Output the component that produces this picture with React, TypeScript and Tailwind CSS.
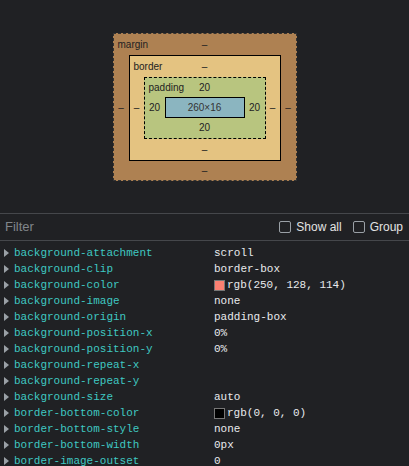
const rows: { name: string; value?: string; swatch?: string }[] = [
  { name: 'background-attachment', value: 'scroll' },
  { name: 'background-clip', value: 'border-box' },
  { name: 'background-color', value: 'rgb(250, 128, 114)', swatch: '#fa8072' },
  { name: 'background-image', value: 'none' },
  { name: 'background-origin', value: 'padding-box' },
  { name: 'background-position-x', value: '0%' },
  { name: 'background-position-y', value: '0%' },
  { name: 'background-repeat-x' },
  { name: 'background-repeat-y' },
  { name: 'background-size', value: 'auto' },
  { name: 'border-bottom-color', value: 'rgb(0, 0, 0)', swatch: '#000000' },
  { name: 'border-bottom-style', value: 'none' },
  { name: 'border-bottom-width', value: '0px' },
  { name: 'border-image-outset', value: '0' },
];

function BoxModel() {
  return (
    <div
      className="w-[184px] h-[148px] border border-dashed border-[#333] bg-[#ae8152] flex flex-col text-[10px] text-[#222] leading-none"
      style={{ fontFamily: '"Liberation Sans", Arial, sans-serif' }}
    >
      <div className="h-[21px] grid grid-cols-[1fr_auto_1fr] items-center px-[4px]">
        <span>margin</span>
        <span>–</span>
        <span />
      </div>
      <div className="flex items-center">
        <div className="w-[15px] text-center">–</div>
        <div className="w-[152px] h-[106px] border border-black bg-[#e4c381] flex flex-col">
          <div className="h-[21px] grid grid-cols-[1fr_auto_1fr] items-center px-[4px]">
            <span>border</span>
            <span>–</span>
            <span />
          </div>
          <div className="flex items-center">
            <div className="w-[14px] text-center">–</div>
            <div className="w-[122px] h-[62px] border border-dashed border-black bg-[#b8c57f] flex flex-col">
              <div className="h-[19px] grid grid-cols-[1fr_auto_1fr] items-center px-[4px]">
                <span>padding</span>
                <span>20</span>
                <span />
              </div>
              <div className="flex items-center">
                <div className="w-[20px] text-center">20</div>
                <div className="w-[80px] h-[21px] border border-black bg-[#8bb5c0] flex items-center justify-center text-[#333]">
                  260×16
                </div>
                <div className="w-[20px] text-center">20</div>
              </div>
              <div className="flex-1 flex items-center justify-center">20</div>
            </div>
            <div className="w-[14px] text-center">–</div>
          </div>
          <div className="flex-1 flex items-center justify-center">–</div>
        </div>
        <div className="w-[15px] text-center">–</div>
      </div>
      <div className="flex-1 flex items-center justify-center">–</div>
    </div>
  );
}

function Checkbox({ label }: { label: string }) {
  return (
    <label className="flex items-center gap-[5px]">
      <span className="w-[12px] h-[12px] rounded-[2px] border border-[#9aa0a6]" />
      <span>{label}</span>
    </label>
  );
}

export default function App() {
  return (
    <div className="w-[409px] h-[466px] bg-[#202124] overflow-hidden flex flex-col">
      <div className="h-[213px] shrink-0 flex justify-center pt-[33px]">
        <BoxModel />
      </div>
      <div
        className="h-[28px] shrink-0 border-y border-[#45474b] flex items-center justify-between pl-[5px] pr-[6px] text-[12px] text-[#e3e3e3]"
        style={{ fontFamily: '"Liberation Sans", Arial, sans-serif' }}
      >
        <span className="text-[#80868b] text-[13px]">Filter</span>
        <div className="flex items-center gap-[11px]">
          <Checkbox label="Show all" />
          <Checkbox label="Group" />
        </div>
      </div>
      <div className="shrink-0 pt-[4px] text-[11px]" style={{ fontFamily: '"Liberation Mono", monospace' }}>
        {rows.map((r) => (
          <div key={r.name} className="h-[16px] flex items-center">
            <div className="w-[14px] flex items-center pl-[4px]">
              <svg width="5" height="8" viewBox="0 0 5 8">
                <path d="M0 0 L5 4 L0 8 Z" fill="#9aa0a6" />
              </svg>
            </div>
            <span className="w-[200px] text-[#3fc8c2]">{r.name}</span>
            {r.value && (
              <span className="flex items-center text-[#e8eaed]">
                {r.swatch && (
                  <span className="w-[11px] h-[11px] mr-[2px] border border-[#777]" style={{ background: r.swatch }} />
                )}
                {r.value}
              </span>
            )}
          </div>
        ))}
      </div>
    </div>
  );
}
